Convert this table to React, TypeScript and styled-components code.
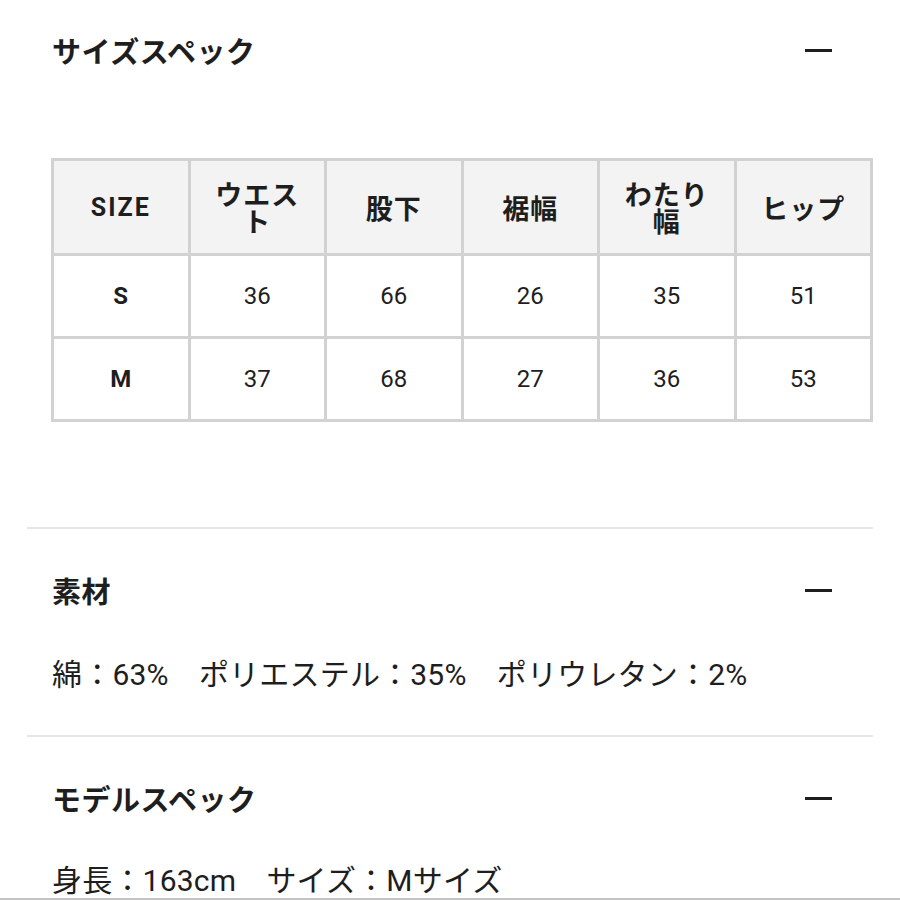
import React from "react";
import styled, { createGlobalStyle } from "styled-components";

const Global = createGlobalStyle`
  html, body { margin: 0; padding: 0; background: #fff; }
  body {
    font-family: Roboto, "Noto Sans CJK JP", sans-serif;
    color: #1e1e1e;
  }
`;

const Screen = styled.div`
  height: 900px;
  box-sizing: border-box;
  overflow: hidden;
  border-bottom: 2px solid #c4c4c4;
`;

const Page = styled.div`
  width: 846px;
  margin: 0 27px;
`;

const Section = styled.section<{ $top: number; $bottom: number; $divider?: boolean }>`
  padding: ${(p) => p.$top}px 0 ${(p) => p.$bottom}px;
  border-bottom: ${(p) => (p.$divider ? "2px solid #e6e6e6" : "none")};
`;

const Header = styled.div`
  display: flex;
  align-items: center;
  justify-content: space-between;
  height: 40px;
  padding-left: 25px;
  padding-right: 41px;
`;

const Title = styled.h2`
  margin: 0;
  font-family: "Noto Sans CJK JP", sans-serif;
  font-size: 29px;
  font-weight: 700;
  line-height: 40px;
  letter-spacing: 0.5px;
`;

const Minus = styled.span`
  display: block;
  width: 27px;
  height: 3px;
  background: #1e1e1e;
`;

const Body = styled.p<{ $gap: number }>`
  margin: ${(p) => p.$gap}px 0 0;
  padding-left: 25px;
  font-family: Roboto, "Noto Sans CJK JP", sans-serif;
  font-size: 30px;
  letter-spacing: 0.2px;
  line-height: 40px;
  white-space: pre;
`;

const TableWrap = styled.div`
  margin-top: 88px;
  padding-left: 24px;
`;

const Table = styled.table`
  width: 822px;
  border-collapse: collapse;
  table-layout: fixed;
  border: 3px solid #d2d2d2;
`;

const Th = styled.th<{ $latin?: boolean }>`
  height: 92px;
  padding: 0 16px;
  background: #f3f3f3;
  border: 3px solid #d2d2d2;
  font-family: ${(p) => (p.$latin ? "Roboto, sans-serif" : '"Noto Sans CJK JP", sans-serif')};
  font-size: ${(p) => (p.$latin ? "25px" : "27px")};
  letter-spacing: ${(p) => (p.$latin ? "2px" : "1px")};
  font-weight: 700;
  line-height: 27px;
  text-align: center;
  vertical-align: middle;
`;

const Td = styled.td<{ $bold?: boolean }>`
  height: 80px;
  padding: 0;
  border: 3px solid #d2d2d2;
  font-family: Roboto, sans-serif;
  font-size: 24px;
  font-weight: ${(p) => (p.$bold ? 700 : 400)};
  text-align: center;
  vertical-align: middle;
`;

const heads = ["ウエスト", "股下", "裾幅", "わたり幅", "ヒップ"];
const rows: [string, number[]][] = [
  ["S", [36, 66, 26, 35, 51]],
  ["M", [37, 68, 27, 36, 53]],
];

export default function App() {
  return (
    <>
      <Global />
      <Screen>
        <Page>
          <Section $top={30} $bottom={105} $divider>
            <Header>
              <Title>サイズスペック</Title>
              <Minus />
            </Header>
            <TableWrap>
              <Table>
                <thead>
                  <tr>
                    <Th $latin>SIZE</Th>
                    {heads.map((h) => (
                      <Th key={h}>{h}</Th>
                    ))}
                  </tr>
                </thead>
                <tbody>
                  {rows.map(([size, vals]) => (
                    <tr key={size}>
                      <Td $bold>{size}</Td>
                      {vals.map((v, i) => (
                        <Td key={i}>{v}</Td>
                      ))}
                    </tr>
                  ))}
                </tbody>
              </Table>
            </TableWrap>
          </Section>
          <Section $top={41} $bottom={40} $divider>
            <Header>
              <Title>素材</Title>
              <Minus />
            </Header>
            <Body $gap={45}>{"綿：63%　ポリエステル：35%　ポリウレタン：2%"}</Body>
          </Section>
          <Section $top={41} $bottom={0}>
            <Header>
              <Title>モデルスペック</Title>
              <Minus />
            </Header>
            <Body $gap={43}>{"身長：163cm　サイズ：Mサイズ"}</Body>
          </Section>
        </Page>
      </Screen>
    </>
  );
}
